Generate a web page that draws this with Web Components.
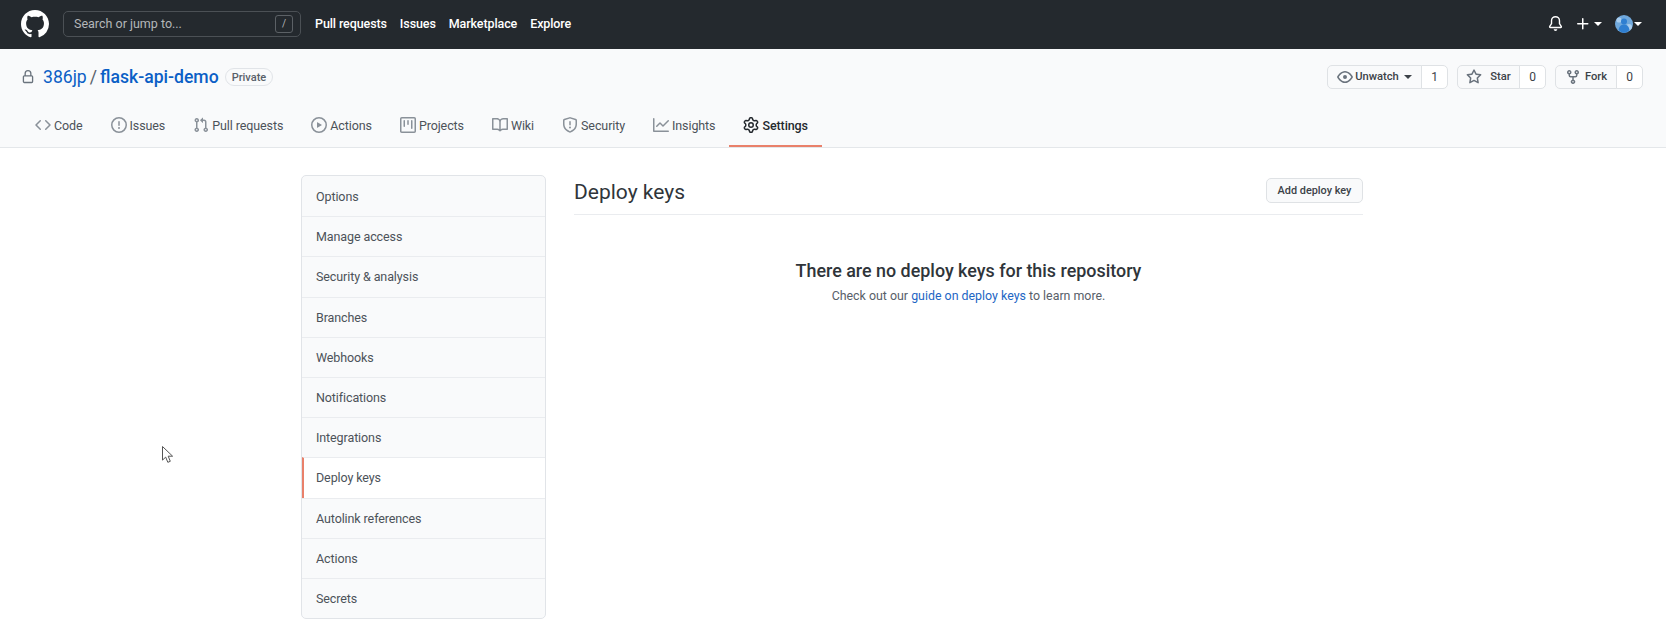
<!DOCTYPE html>
<html lang="en">
<head>
<meta charset="utf-8">
<title>Deploy keys</title>
<style>
  html, body { margin: 0; padding: 0; background: #fff; }
  body { font-family: Roboto, "Liberation Sans", sans-serif; font-size: 14px; color: #24292e; }
</style>
</head>
<body>
<gh-header></gh-header>
<repo-head></repo-head>
<settings-page>
  <side-nav slot="side">
    <nav-item>Options</nav-item>
    <nav-item>Manage access</nav-item>
    <nav-item>Security &amp; analysis</nav-item>
    <nav-item>Branches</nav-item>
    <nav-item>Webhooks</nav-item>
    <nav-item>Notifications</nav-item>
    <nav-item>Integrations</nav-item>
    <nav-item active>Deploy keys</nav-item>
    <nav-item>Autolink references</nav-item>
    <nav-item>Actions</nav-item>
    <nav-item>Secrets</nav-item>
  </side-nav>
  <deploy-keys slot="main"></deploy-keys>
</settings-page>
<mouse-cursor></mouse-cursor>

<script>
const ICONS = {
  github: 'M8 0C3.58 0 0 3.58 0 8c0 3.54 2.29 6.53 5.47 7.59.4.07.55-.17.55-.38 0-.19-.01-.82-.01-1.49-2.01.37-2.53-.49-2.69-.94-.09-.23-.48-.94-.82-1.13-.28-.15-.68-.52-.01-.53.63-.01 1.08.58 1.23.82.72 1.21 1.87.87 2.33.66.07-.52.28-.87.51-1.07-1.78-.2-3.64-.89-3.64-3.95 0-.87.31-1.59.82-2.15-.08-.2-.36-1.02.08-2.12 0 0 .67-.21 2.2.82.64-.18 1.32-.27 2-.27.68 0 1.36.09 2 .27 1.53-1.04 2.2-.82 2.2-.82.44 1.1.16 1.92.08 2.12.51.56.82 1.27.82 2.15 0 3.07-1.87 3.75-3.65 3.95.29.25.54.73.54 1.48 0 1.07-.01 1.93-.01 2.2 0 .21.15.46.55.38A8.013 8.013 0 0016 8c0-4.42-3.58-8-8-8z',
  lock: 'M4 4v2h-.25A1.75 1.75 0 002 7.75v5.5c0 .966.784 1.75 1.75 1.75h8.5A1.75 1.75 0 0014 13.25v-5.5A1.75 1.75 0 0012.25 6H12V4a4 4 0 10-8 0zm6.5 2V4a2.5 2.5 0 00-5 0v2h5zM12 7.5h.25a.25.25 0 01.25.25v5.5a.25.25 0 01-.25.25h-8.5a.25.25 0 01-.25-.25v-5.5a.25.25 0 01.25-.25H12z',
  code: 'M4.72 3.22a.75.75 0 011.06 1.06L2.06 8l3.72 3.72a.75.75 0 11-1.06 1.06L.47 8.53a.75.75 0 010-1.06l4.25-4.25zm6.56 0a.75.75 0 10-1.06 1.06L13.94 8l-3.72 3.72a.75.75 0 101.06 1.06l4.25-4.25a.75.75 0 000-1.06l-4.25-4.25z',
  issue: 'M8 1.5a6.5 6.5 0 100 13 6.5 6.5 0 000-13zM0 8a8 8 0 1116 0A8 8 0 010 8zm9 3a1 1 0 11-2 0 1 1 0 012 0zm-.25-6.25a.75.75 0 00-1.5 0v3.5a.75.75 0 001.5 0v-3.5z',
  pull: 'M7.177 3.073L9.573.677A.25.25 0 0110 .854v4.792a.25.25 0 01-.427.177L7.177 3.427a.25.25 0 010-.354zM3.75 2.5a.75.75 0 100 1.5.75.75 0 000-1.5zm-2.25.75a2.25 2.25 0 113 2.122v5.256a2.251 2.251 0 11-1.5 0V5.372A2.25 2.25 0 011.5 3.25zM11 2.5h-1V4h1a1 1 0 011 1v5.628a2.251 2.251 0 101.5 0V5A2.5 2.5 0 0011 2.5zm1 10.25a.75.75 0 111.5 0 .75.75 0 01-1.5 0zM3.75 12a.75.75 0 100 1.5.75.75 0 000-1.5z',
  play: 'M1.5 8a6.5 6.5 0 1113 0 6.5 6.5 0 01-13 0zM8 0a8 8 0 100 16A8 8 0 008 0zM6.379 5.227A.25.25 0 006 5.442v5.117a.25.25 0 00.379.214l4.264-2.559a.25.25 0 000-.428L6.379 5.227z',
  project: 'M1.75 0A1.75 1.75 0 000 1.75v12.5C0 15.216.784 16 1.75 16h12.5A1.75 1.75 0 0016 14.25V1.75A1.75 1.75 0 0014.25 0H1.75zM1.5 1.75a.25.25 0 01.25-.25h12.5a.25.25 0 01.25.25v12.5a.25.25 0 01-.25.25H1.75a.25.25 0 01-.25-.25V1.75zM11.75 3a.75.75 0 00-.75.75v7.5a.75.75 0 001.5 0v-7.5a.75.75 0 00-.75-.75zm-8.25.75a.75.75 0 011.5 0v5.5a.75.75 0 01-1.5 0v-5.5zM8 3a.75.75 0 00-.75.75v3.5a.75.75 0 001.5 0v-3.5A.75.75 0 008 3z',
  book: 'M0 1.75A.75.75 0 01.75 1h4.253c1.227 0 2.317.59 3 1.501A3.744 3.744 0 0111.006 1h4.245a.75.75 0 01.75.75v10.5a.75.75 0 01-.75.75h-4.507a2.25 2.25 0 00-1.591.659l-.622.621a.75.75 0 01-1.06 0l-.622-.621A2.25 2.25 0 005.258 13H.75a.75.75 0 01-.75-.75V1.75zm8.755 3a2.25 2.25 0 012.25-2.25H14.5v9h-3.757c-.71 0-1.4.201-1.992.572l.004-7.322zm-1.504 7.324l.004-5.073-.002-2.253A2.25 2.25 0 005.003 2.5H1.5v9h3.757a3.75 3.75 0 011.994.574z',
  shield: 'M7.467.133a1.75 1.75 0 011.066 0l5.25 1.68A1.75 1.75 0 0115 3.48V7c0 1.566-.32 3.182-1.303 4.682-.983 1.498-2.585 2.813-5.032 3.855a1.7 1.7 0 01-1.33 0c-2.447-1.042-4.049-2.357-5.032-3.855C1.32 10.182 1 8.566 1 7V3.48a1.75 1.75 0 011.217-1.667l5.25-1.68zm.61 1.429a.25.25 0 00-.153 0l-5.25 1.68a.25.25 0 00-.174.238V7c0 1.358.275 2.666 1.057 3.86.784 1.194 2.121 2.34 4.366 3.297a.2.2 0 00.154 0c2.245-.956 3.582-2.104 4.366-3.298C13.225 9.666 13.5 8.36 13.5 7V3.48a.25.25 0 00-.174-.237l-5.25-1.68zM9 10.5a1 1 0 11-2 0 1 1 0 012 0zm-.25-5.75a.75.75 0 10-1.5 0v3a.75.75 0 001.5 0v-3z',
  graph: 'M1.5 1.75a.75.75 0 00-1.5 0v12.5c0 .414.336.75.75.75h14.5a.75.75 0 000-1.5H1.5V1.75zm14.28 2.53a.75.75 0 00-1.06-1.06L10 7.94 7.53 5.47a.75.75 0 00-1.06 0L3.22 8.72a.75.75 0 001.06 1.06L7 7.06l2.47 2.47a.75.75 0 001.06 0l5.25-5.25z',
  gear: 'M7.429 1.525a6.593 6.593 0 011.142 0c.036.003.108.036.137.146l.289 1.105c.147.56.55.967.997 1.189.174.086.341.183.501.29.417.278.97.423 1.53.27l1.102-.303c.11-.03.175.016.195.046.219.31.41.641.573.989.014.031.022.11-.059.19l-.815.806c-.411.406-.562.957-.53 1.456a4.588 4.588 0 010 .582c-.032.499.119 1.05.53 1.456l.815.806c.08.08.073.159.059.19a6.494 6.494 0 01-.573.99c-.02.029-.086.074-.195.045l-1.103-.303c-.559-.153-1.112-.008-1.529.27-.16.107-.327.204-.5.29-.449.222-.851.628-.998 1.189l-.289 1.105c-.029.11-.101.143-.137.146a6.613 6.613 0 01-1.142 0c-.036-.003-.108-.037-.137-.146l-.289-1.105c-.147-.56-.55-.967-.997-1.189a4.502 4.502 0 01-.501-.29c-.417-.278-.97-.423-1.53-.27l-1.102.303c-.11.03-.175-.016-.195-.046a6.492 6.492 0 01-.573-.989c-.014-.031-.022-.11.059-.19l.815-.806c.411-.406.562-.957.53-1.456a4.587 4.587 0 010-.582c.032-.499-.119-1.05-.53-1.456l-.815-.806c-.08-.08-.073-.159-.059-.19a6.44 6.44 0 01.573-.99c.02-.029.086-.075.195-.045l1.103.303c.559.153 1.112.008 1.529-.27.16-.107.327-.204.5-.29.449-.222.851-.628.998-1.189l.289-1.105c.029-.11.101-.143.137-.146zM8 0c-.236 0-.47.01-.701.03-.743.065-1.29.615-1.458 1.261l-.29 1.106c-.017.066-.078.158-.211.224a5.994 5.994 0 00-.668.386c-.123.082-.233.09-.3.071L3.27 2.776c-.644-.177-1.392.02-1.82.63a7.977 7.977 0 00-.704 1.217c-.315.675-.111 1.422.363 1.891l.815.806c.05.048.098.147.088.294a6.084 6.084 0 000 .772c.01.147-.038.246-.088.294l-.815.806c-.474.469-.678 1.216-.363 1.891.2.428.436.835.704 1.218.428.609 1.176.806 1.82.63l1.103-.303c.066-.019.176-.011.299.071.213.143.436.272.668.386.133.066.194.158.212.224l.289 1.106c.169.646.715 1.196 1.458 1.26a8.094 8.094 0 001.402 0c.743-.064 1.29-.614 1.458-1.26l.29-1.106c.017-.066.078-.158.211-.224a5.98 5.98 0 00.668-.386c.123-.082.233-.09.3-.071l1.102.302c.644.177 1.392-.02 1.82-.63.268-.382.505-.789.704-1.217.315-.675.111-1.422-.364-1.891l-.814-.806c-.05-.048-.098-.147-.088-.294a6.1 6.1 0 000-.772c-.01-.147.039-.246.088-.294l.814-.806c.475-.469.679-1.216.364-1.891a7.992 7.992 0 00-.704-1.218c-.428-.609-1.176-.806-1.82-.63l-1.103.303c-.066.019-.176.011-.299-.071a5.991 5.991 0 00-.668-.386c-.133-.066-.194-.158-.212-.224L10.16 1.29C9.99.645 9.444.095 8.701.031A8.094 8.094 0 008 0zm1.5 8a1.5 1.5 0 11-3 0 1.5 1.5 0 013 0zM11 8a3 3 0 11-6 0 3 3 0 016 0z',
  bell: 'M8 16a2 2 0 001.985-1.75c.017-.137-.097-.25-.235-.25h-3.5c-.138 0-.252.113-.235.25A2 2 0 008 16z M3 5a5 5 0 0110 0v2.947c0 .05.015.098.042.139l1.703 2.555A1.518 1.518 0 0113.482 13H2.518a1.518 1.518 0 01-1.263-2.36l1.703-2.554A.25.25 0 003 7.947V5zm5-3.5A3.5 3.5 0 004.5 5v2.947c0 .346-.102.683-.294.97l-1.703 2.556a.018.018 0 00-.003.01l.001.006c0 .002.002.004.004.006a.017.017 0 00.006.004l.007.001h10.964l.007-.001a.018.018 0 00.006-.004.017.017 0 00.004-.006l.001-.007a.017.017 0 00-.003-.01l-1.703-2.554a1.75 1.75 0 01-.294-.97V5A3.5 3.5 0 008 1.5z',
  plus: 'M7.75 2a.75.75 0 01.75.75V7h4.25a.75.75 0 110 1.5H8.5v4.25a.75.75 0 11-1.5 0V8.5H2.75a.75.75 0 010-1.5H7V2.75A.75.75 0 017.75 2z',
  eye: 'M1.679 7.932c.412-.621 1.242-1.75 2.366-2.717C5.175 4.242 6.527 3.5 8 3.5c1.473 0 2.824.742 3.955 1.715 1.124.967 1.954 2.096 2.366 2.717a.119.119 0 010 .136c-.412.621-1.242 1.75-2.366 2.717C10.825 11.758 9.473 12.5 8 12.5c-1.473 0-2.824-.742-3.955-1.715C2.92 9.818 2.09 8.69 1.679 8.068a.119.119 0 010-.136zM8 2c-1.981 0-3.67.992-4.933 2.078C1.797 5.169.88 6.423.43 7.1a1.619 1.619 0 000 1.798c.45.678 1.367 1.932 2.637 3.024C4.329 13.008 6.019 14 8 14c1.981 0 3.67-.992 4.933-2.078 1.27-1.091 2.187-2.345 2.637-3.023a1.619 1.619 0 000-1.798c-.45-.678-1.367-1.932-2.637-3.023C11.671 2.992 9.981 2 8 2zm0 8a2 2 0 100-4 2 2 0 000 4z',
  star: 'M8 .25a.75.75 0 01.673.418l1.882 3.815 4.21.612a.75.75 0 01.416 1.279l-3.046 2.97.719 4.192a.75.75 0 01-1.088.791L8 12.347l-3.766 1.98a.75.75 0 01-1.088-.79l.72-4.194L.818 6.374a.75.75 0 01.416-1.28l4.21-.611L7.327.668A.75.75 0 018 .25zm0 2.445L6.615 5.5a.75.75 0 01-.564.41l-3.097.45 2.24 2.184a.75.75 0 01.216.664l-.528 3.084 2.769-1.456a.75.75 0 01.698 0l2.77 1.456-.53-3.084a.75.75 0 01.216-.664l2.24-2.183-3.096-.45a.75.75 0 01-.564-.41L8 2.694v.001z',
  fork: 'M5 3.25a.75.75 0 11-1.5 0 .75.75 0 011.5 0zm0 2.122a2.25 2.25 0 10-1.5 0v.878A2.25 2.25 0 005.75 8.5h1.5v2.128a2.251 2.251 0 101.5 0V8.5h1.5a2.25 2.25 0 002.25-2.25v-.878a2.25 2.25 0 10-1.5 0v.878a.75.75 0 01-.75.75h-4.5A.75.75 0 015 6.25v-.878zm3.75 7.378a.75.75 0 11-1.5 0 .75.75 0 011.5 0zm3-8.75a.75.75 0 100-1.5.75.75 0 000 1.5z'
};

class GhIcon extends HTMLElement {
  connectedCallback() {
    const size = this.getAttribute('size') || 16;
    this.attachShadow({mode: 'open'}).innerHTML = `
      <style>
        :host { display: inline-flex; flex: none; color: inherit; }
        svg { display: block; fill: currentColor; }
      </style>
      <svg width="${size}" height="${size}" viewBox="0 0 16 16"><path fill-rule="evenodd" d="${ICONS[this.getAttribute('name')]}"></path></svg>
    `;
  }
}
customElements.define('gh-icon', GhIcon);

class GhHeader extends HTMLElement {
  constructor() {
    super();
    this.attachShadow({mode: 'open'}).innerHTML = `
      <style>
        :host {
          display: flex;
          align-items: center;
          height: 49px;
          box-sizing: border-box;
          background: #24292e;
          color: #fff;
          padding: 0 24px 2px 21px;
        }
        .search {
          display: flex;
          align-items: center;
          justify-content: space-between;
          box-sizing: border-box;
          width: 238px;
          height: 26px;
          margin-left: 14px;
          padding: 0 7px 0 10px;
          border: 1px solid #4b5055;
          border-radius: 5px;
          color: #b4b7ba;
          font-size: 12.5px;
        }
        .slash {
          display: flex;
          align-items: center;
          justify-content: center;
          width: 16px;
          height: 16px;
          border: 1px solid #5c6166;
          border-radius: 3px;
          font-size: 10px;
        }
        nav {
          display: flex;
          gap: 13px;
          margin-left: 14px;
          font-size: 12.5px;
          font-weight: 500;
          letter-spacing: -.1px;
        }
        .right { display: flex; align-items: center; margin-left: auto; }
        .caret {
          width: 0;
          height: 0;
          border: 4px solid transparent;
          border-top-color: #fff;
          border-bottom: 0;
          margin-left: 3px;
        }
        .plus { margin-left: 12px; }
        .avatar { margin-left: 13px; display: block; }
      </style>
      <gh-icon name="github" size="28"></gh-icon>
      <div class="search"><span>Search or jump to...</span><span class="slash">/</span></div>
      <nav><span>Pull requests</span><span>Issues</span><span>Marketplace</span><span>Explore</span></nav>
      <div class="right">
        <gh-icon name="bell" size="15"></gh-icon>
        <gh-icon class="plus" name="plus" size="16"></gh-icon>
        <span class="caret"></span>
        <svg class="avatar" width="18" height="18" viewBox="0 0 18 18">
          <circle cx="9" cy="9" r="9" fill="#6fa8dc"></circle>
          <circle cx="4" cy="5" r="2.6" fill="#a9cdee"></circle>
          <circle cx="14" cy="12" r="3" fill="#a9cdee"></circle>
          <circle cx="9" cy="6.5" r="3" fill="#2f7fd1"></circle>
          <path d="M3.5 15c.6-3.6 2.8-5.4 5.5-5.4s4.9 1.8 5.5 5.4A9 9 0 019 18a9 9 0 01-5.5-3z" fill="#2f7fd1"></path>
        </svg>
        <span class="caret" style="margin-left:1px"></span>
      </div>
    `;
  }
}
customElements.define('gh-header', GhHeader);

class CountButton extends HTMLElement {
  constructor() {
    super();
    this.attachShadow({mode: 'open'}).innerHTML = `
      <style>
        :host {
          display: inline-flex;
          height: 24px;
          box-sizing: border-box;
          font-size: 11.2px;
          font-weight: 500;
          color: #3c4248;
        }
        .label, .count {
          display: flex;
          align-items: center;
          box-sizing: border-box;
          border: 1px solid #dfe2e5;
        }
        .label {
          gap: var(--gap, 4px);
          width: var(--label-w, 60px);
          justify-content: center;
          background: #f9fafb;
          border-radius: 5px 0 0 5px;
        }
        .count {
          justify-content: center;
          width: var(--count-w, 27px);
          margin-left: -1px;
          background: #fff;
          border-radius: 0 5px 5px 0;
          font-size: 12px;
          font-weight: 400;
        }
        ::slotted(gh-icon) { color: #6a737d; }
      </style>
      <span class="label"><slot></slot></span>
      <span class="count">${this.getAttribute('count')}</span>
    `;
  }
}
customElements.define('count-button', CountButton);

class RepoTab extends HTMLElement {
  constructor() {
    super();
    const icon = this.getAttribute('icon');
    this.attachShadow({mode: 'open'}).innerHTML = `
      <style>
        :host {
          display: flex;
          align-items: center;
          gap: 3px;
          box-sizing: border-box;
          height: 40px;
          padding: 0 14px 2px;
          border-bottom: 2px solid transparent;
          font-size: 12.5px;
          letter-spacing: -.1px;
          color: #4c5259;
          white-space: nowrap;
        }
        :host([selected]) {
          border-bottom-color: #e9806a;
          font-weight: 500;
          color: #24292e;
        }
        gh-icon { color: #8a9199; }
        :host([selected]) gh-icon { color: #24292e; }
      </style>
      <gh-icon name="${icon}"></gh-icon>
      <slot></slot>
    `;
  }
}
customElements.define('repo-tab', RepoTab);

class RepoHead extends HTMLElement {
  constructor() {
    super();
    this.attachShadow({mode: 'open'}).innerHTML = `
      <style>
        :host {
          display: block;
          box-sizing: border-box;
          height: 99px;
          background: #f9fafb;
          border-bottom: 1px solid #e4e7ea;
        }
        .top {
          display: flex;
          align-items: center;
          justify-content: space-between;
          box-sizing: border-box;
          height: 58px;
          padding: 0 23px 3px 21px;
        }
        .title {
          display: flex;
          align-items: center;
          font-size: 17.6px;
          color: #0b5fc6;
        }
        .title gh-icon { color: #6a737d; margin-right: 8px; }
        .title .slash { color: #586069; margin: 0 3px; }
        .title b { font-weight: 500; }
        .pill {
          margin-left: 6px;
          padding: 0 6px;
          height: 18px;
          line-height: 17px;
          box-sizing: border-box;
          border: 1px solid #e1e4e8;
          border-radius: 10px;
          font-size: 11px;
          font-weight: 500;
          color: #586069;
        }
        .actions { display: flex; gap: 9px; }
        .caret {
          width: 0;
          height: 0;
          border: 4px solid transparent;
          border-top-color: #3c4248;
          border-bottom: 0;
          margin-left: 3px;
        }
        nav { display: flex; padding-left: 21px; }
      </style>
      <div class="top">
        <div class="title">
          <gh-icon name="lock" size="14"></gh-icon>
          <span>386jp</span><span class="slash">/</span><b>flask-api-demo</b>
          <span class="pill">Private</span>
        </div>
        <div class="actions">
          <count-button count="1" style="--label-w:95px;--gap:2px"><gh-icon name="eye"></gh-icon><span>Unwatch</span><span class="caret"></span></count-button>
          <count-button count="0" style="--label-w:63px;--gap:8px"><gh-icon name="star"></gh-icon><span>Star</span></count-button>
          <count-button count="0" style="--label-w:62px;--gap:4px"><gh-icon name="fork"></gh-icon><span>Fork</span></count-button>
        </div>
      </div>
      <nav>
        <repo-tab icon="code">Code</repo-tab>
        <repo-tab icon="issue">Issues</repo-tab>
        <repo-tab icon="pull">Pull requests</repo-tab>
        <repo-tab icon="play">Actions</repo-tab>
        <repo-tab icon="project">Projects</repo-tab>
        <repo-tab icon="book">Wiki</repo-tab>
        <repo-tab icon="shield">Security</repo-tab>
        <repo-tab icon="graph">Insights</repo-tab>
        <repo-tab icon="gear" selected>Settings</repo-tab>
      </nav>
    `;
  }
}
customElements.define('repo-head', RepoHead);

class SettingsPage extends HTMLElement {
  constructor() {
    super();
    this.attachShadow({mode: 'open'}).innerHTML = `
      <style>
        :host {
          display: flex;
          gap: 28px;
          padding: 27px 0 0 301px;
        }
      </style>
      <slot name="side"></slot>
      <slot name="main"></slot>
    `;
  }
}
customElements.define('settings-page', SettingsPage);

class SideNav extends HTMLElement {
  constructor() {
    super();
    this.attachShadow({mode: 'open'}).innerHTML = `
      <style>
        :host {
          display: block;
          width: 245px;
          box-sizing: border-box;
          border: 1px solid #e1e4e8;
          border-radius: 5px;
          overflow: hidden;
          background: #f9fafb;
        }
      </style>
      <slot></slot>
    `;
  }
}
customElements.define('side-nav', SideNav);

class NavItem extends HTMLElement {
  constructor() {
    super();
    this.attachShadow({mode: 'open'}).innerHTML = `
      <style>
        :host {
          display: flex;
          align-items: center;
          box-sizing: border-box;
          height: 40.2px;
          padding: 0 0 0 14px;
          border-top: 1px solid #eaecef;
          font-size: 12.5px;
          letter-spacing: -.1px;
          color: #4c5259;
        }
        :host(:first-child) { border-top: 0; }
        :host([active]) {
          background: #fff;
          padding-left: 12px;
          border-left: 2px solid #e9806a;
        }
      </style>
      <slot></slot>
    `;
  }
}
customElements.define('nav-item', NavItem);

class DeployKeys extends HTMLElement {
  constructor() {
    super();
    this.attachShadow({mode: 'open'}).innerHTML = `
      <style>
        :host { display: block; width: 789px; }
        .head {
          display: flex;
          align-items: flex-start;
          justify-content: space-between;
          height: 39px;
          border-bottom: 1px solid #eaecef;
        }
        h2 {
          margin: 0;
          font-size: 21px;
          font-weight: 400;
          line-height: 34px;
          color: #2f353a;
        }
        button {
          font: inherit;
          width: 97px;
          height: 25px;
          margin-top: 3px;
          padding: 0;
          background: #f9fafb;
          border: 1px solid #dfe2e5;
          border-radius: 5px;
          font-size: 10.9px;
          font-weight: 500;
          color: #3c4248;
        }
        .blank { text-align: center; padding-top: 42px; }
        h3 {
          margin: 0;
          font-size: 17.9px;
          font-weight: 500;
          line-height: 28px;
          color: #2f353a;
        }
        p {
          margin: 1px 0 0;
          font-size: 12.4px;
          line-height: 20px;
          color: #586069;
        }
        a { color: #1d66c4; text-decoration: none; }
      </style>
      <div class="head">
        <h2>Deploy keys</h2>
        <button>Add deploy key</button>
      </div>
      <div class="blank">
        <h3>There are no deploy keys for this repository</h3>
        <p>Check out our <a href="#">guide on deploy keys</a> to learn more.</p>
      </div>
    `;
  }
}
customElements.define('deploy-keys', DeployKeys);

// sits over the page, it was in the capture
class MouseCursor extends HTMLElement {
  constructor() {
    super();
    this.attachShadow({mode: 'open'}).innerHTML = `
      <style>
        :host { position: absolute; left: 162px; top: 446px; width: 12px; height: 18px; }
        svg { display: block; }
      </style>
      <svg width="12" height="18" viewBox="0 0 12 18">
        <path d="M.5.5v13.6l3.2-3 2.1 5.2 2.5-1-2.1-5.1h4.4z" fill="#fff" stroke="#555" stroke-width="1"></path>
      </svg>
    `;
  }
}
customElements.define('mouse-cursor', MouseCursor);
</script>
</body>
</html>
